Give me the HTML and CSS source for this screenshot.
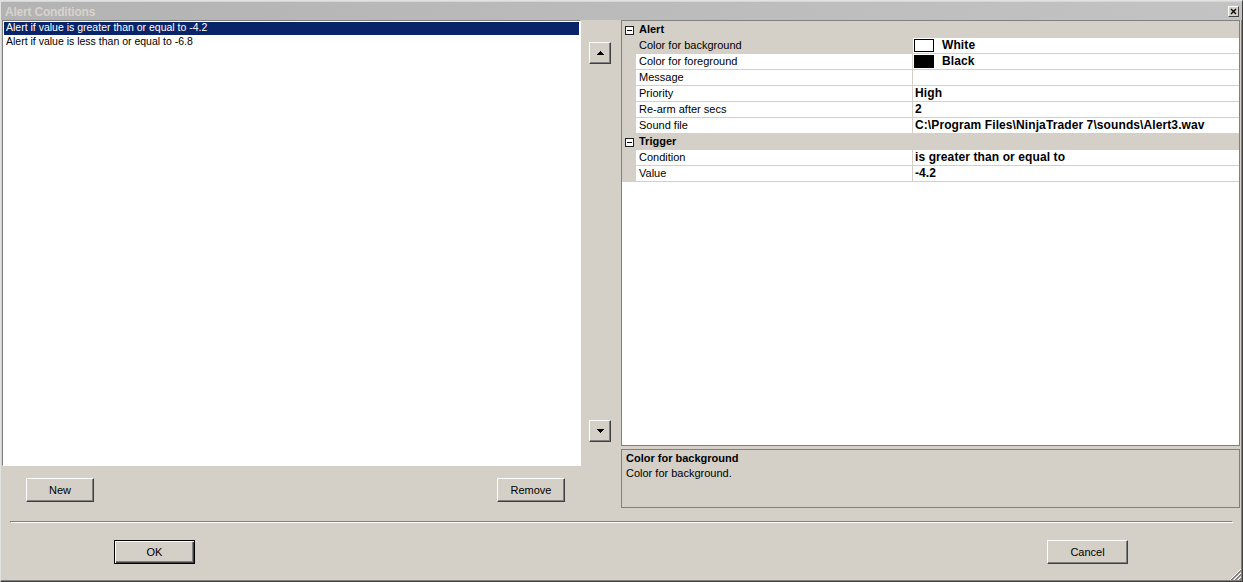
FILE: index.html
```html
<!DOCTYPE html>
<html>
<head>
<meta charset="utf-8">
<title>Alert Conditions</title>
<link rel="stylesheet" href="styles.css">
</head>
<body>
<div class="window">
  <div class="titlebar">
    <span class="title">Alert Conditions</span>
    <span class="close-btn">
      <svg width="9" height="9" viewBox="0 0 9 9"><path d="M2 2 L7 7 M7 2 L2 7" stroke="#000" stroke-width="1.4" fill="none"/></svg>
    </span>
  </div>

  <div class="content">
    <div class="left-col">
      <div class="listbox">
        <div class="list-item selected">Alert if value is greater than or equal to -4.2</div>
        <div class="list-item">Alert if value is less than or equal to -6.8</div>
      </div>
      <div class="list-buttons">
        <button class="btn btn-small">New</button>
        <button class="btn btn-small">Remove</button>
      </div>
    </div>

    <div class="arrows">
      <button class="btn arrow-btn">
        <svg width="7" height="4" viewBox="0 0 7 4" shape-rendering="crispEdges"><path d="M3 0h1v1h1v1h1v1h1v1H0V3h1V2h1V1h1z" fill="#000"/></svg>
      </button>
      <button class="btn arrow-btn arrow-down">
        <svg width="7" height="4" viewBox="0 0 7 4" shape-rendering="crispEdges"><path d="M0 0h7v1H6v1H5v1H4v1H3V3H2V2H1V1H0z" fill="#000"/></svg>
      </button>
    </div>

    <div class="right-col">
      <div class="propgrid">
        <div class="pg-row category">
          <div class="pg-gutter"><span class="expander"></span></div>
          <div class="pg-cat-label">Alert</div>
        </div>
        <div class="pg-row">
          <div class="pg-gutter"></div>
          <div class="pg-label selected">Color for background</div>
          <div class="pg-value"><span class="swatch swatch-white"></span>White</div>
        </div>
        <div class="pg-row">
          <div class="pg-gutter"></div>
          <div class="pg-label">Color for foreground</div>
          <div class="pg-value"><span class="swatch swatch-black"></span>Black</div>
        </div>
        <div class="pg-row">
          <div class="pg-gutter"></div>
          <div class="pg-label">Message</div>
          <div class="pg-value"></div>
        </div>
        <div class="pg-row">
          <div class="pg-gutter"></div>
          <div class="pg-label">Priority</div>
          <div class="pg-value">High</div>
        </div>
        <div class="pg-row">
          <div class="pg-gutter"></div>
          <div class="pg-label">Re-arm after secs</div>
          <div class="pg-value">2</div>
        </div>
        <div class="pg-row">
          <div class="pg-gutter"></div>
          <div class="pg-label">Sound file</div>
          <div class="pg-value">C:\Program Files\NinjaTrader 7\sounds\Alert3.wav</div>
        </div>
        <div class="pg-row category">
          <div class="pg-gutter"><span class="expander"></span></div>
          <div class="pg-cat-label">Trigger</div>
        </div>
        <div class="pg-row">
          <div class="pg-gutter"></div>
          <div class="pg-label">Condition</div>
          <div class="pg-value">is greater than or equal to</div>
        </div>
        <div class="pg-row">
          <div class="pg-gutter"></div>
          <div class="pg-label">Value</div>
          <div class="pg-value">-4.2</div>
        </div>
      </div>
      <div class="desc">
        <div class="desc-title">Color for background</div>
        <div class="desc-text">Color for background.</div>
      </div>
    </div>
  </div>

  <div class="separator"></div>

  <div class="footer">
    <button class="btn btn-wide btn-default">OK</button>
    <button class="btn btn-wide">Cancel</button>
  </div>

  <span class="grip">
    <svg width="12" height="12" viewBox="0 0 12 12" shape-rendering="crispEdges">
      <g stroke="#ffffff" stroke-width="1">
        <path d="M12 1 L1 12 M12 5 L5 12 M12 9 L9 12"/>
      </g>
      <g stroke="#808080" stroke-width="1">
        <path d="M12 2 L2 12 M12 3 L3 12 M12 6 L6 12 M12 7 L7 12 M12 10 L10 12 M12 11 L11 12"/>
      </g>
    </svg>
  </span>
</div>
</body>
</html>
```

FILE: styles.css
```css
html, body {
  margin: 0;
  padding: 0;
  background: #d4d0c8;
}

body {
  font-family: "Liberation Sans", Arial, sans-serif;
  font-size: 11px;
  color: #000;
}

/* dialog frame */
.window {
  position: relative;
  width: 1243px;
  height: 582px;
  box-sizing: border-box;
  background: #d4d0c8;
  border-top: 1px solid #e2e2e2;
  border-left: 1px solid #e2e2e2;
  border-right: 1px solid #404040;
  border-bottom: 1px solid #404040;
  box-shadow: inset -1px -1px 0 #808080;
  display: flex;
  flex-direction: column;
}

/* inactive caption */
.titlebar {
  height: 19px;
  flex: none;
  display: flex;
  justify-content: space-between;
  align-items: flex-start;
  background: linear-gradient(to right, #b3b3b3, #c3c3c3);
  box-shadow: inset 0 1px 0 #d6d6d6;
  padding: 0 3px 0 4px;
}

.title {
  padding-top: 6px;
  font-size: 12px;
  font-weight: bold;
  line-height: 11px;
  color: #d6d3cd;
  letter-spacing: -0.2px;
}

.close-btn {
  margin-top: 5px;
  width: 11px;
  height: 11px;
  box-sizing: border-box;
  background: #d4d0c8;
  border: 1px solid;
  border-color: #ffffff #404040 #404040 #ffffff;
  display: flex;
  align-items: center;
  justify-content: center;
}

/* main area */
.content {
  flex: none;
  height: 488px;
  display: flex;
  padding: 0 1px;
}

.left-col {
  width: 579px;
  display: flex;
  flex-direction: column;
}

.listbox {
  height: 446px;
  box-sizing: border-box;
  background: #fff;
  border: 1px solid;
  border-color: #808080 #ffffff #ffffff #808080;
  padding: 1px;
}

.list-item {
  height: 14px;
  line-height: 11px;
  font-size: 10.5px;
  padding-left: 2px;
  white-space: nowrap;
}

.list-item.selected {
  background: linear-gradient(#0a246a, #0a246a) no-repeat;
  background-size: 100% 13px;
  color: #fff;
}

.list-buttons {
  margin-top: 12px;
  display: flex;
  justify-content: space-between;
  padding: 0 16px 0 24px;
}

/* classic 3D push buttons */
.btn {
  font-family: "Liberation Sans", Arial, sans-serif;
  font-size: 11px;
  color: #000;
  background: #d4d0c8;
  padding: 0;
  margin: 0;
  box-sizing: border-box;
  border: 1px solid;
  border-color: #ffffff #404040 #404040 #ffffff;
  box-shadow: inset -1px -1px 0 #808080;
  display: flex;
  align-items: center;
  justify-content: center;
  outline: none;
}

.btn-small {
  width: 68px;
  height: 24px;
}

.btn-wide {
  width: 81px;
  height: 24px;
}

.btn-default {
  border: 1px solid #000;
  box-shadow: inset 1px 1px 0 #ffffff, inset -1px -1px 0 #404040, inset -2px -2px 0 #808080;
}

.arrows {
  margin-left: 8px;
  margin-right: 10px;
  width: 22px;
  display: flex;
  flex-direction: column;
  padding-top: 22px;
}

.arrow-btn {
  width: 22px;
  height: 22px;
}

.arrow-down {
  margin-top: 356px;
}

/* property grid */
.right-col {
  width: 619px;
  display: flex;
  flex-direction: column;
}

.propgrid {
  height: 426px;
  box-sizing: border-box;
  border: 1px solid #808080;
  padding-top: 1px;
  background: #fff;
}

.pg-row {
  display: grid;
  grid-template-columns: 14px 277px 1fr;
  height: 16px;
  box-sizing: border-box;
  border-bottom: 1px solid #d4d0c8;
}

.propgrid .pg-row:first-child {
  box-shadow: 0 -1px 0 #d4d0c8;
}

.pg-gutter {
  background: #d4d0c8;
}

.pg-row.category {
  background: #d4d0c8;
}

.pg-cat-label {
  grid-column: 2 / 4;
  padding-left: 3px;
  font-weight: bold;
  line-height: 15px;
}

.expander {
  margin: 4px 0 0 3px;
  width: 9px;
  height: 9px;
  box-sizing: border-box;
  border: 1px solid #202020;
  background: #fff;
  display: flex;
  align-items: center;
  justify-content: center;
}

.expander::after {
  content: "";
  width: 5px;
  height: 1px;
  background: #000;
}

.pg-label {
  padding-left: 3px;
  line-height: 15px;
  border-right: 1px solid #d4d0c8;
  white-space: nowrap;
  overflow: hidden;
}

.pg-label.selected {
  background: #d4d0c8;
}

.pg-value {
  padding-left: 2px;
  font-size: 12px;
  font-weight: bold;
  line-height: 15px;
  letter-spacing: 0.1px;
  white-space: nowrap;
  overflow: hidden;
  display: flex;
  align-items: center;
}

.swatch {
  width: 20px;
  height: 13px;
  box-sizing: border-box;
  border: 1px solid #000;
  margin-left: -1px;
  margin-right: 8px;
}

.swatch-white {
  background: #fff;
}

.swatch-black {
  background: #000;
}

/* help text panel */
.desc {
  margin-top: 3px;
  height: 59px;
  box-sizing: border-box;
  border: 1px solid #808080;
  padding: 1px 4px 0;
  line-height: 15px;
}

.desc-title {
  font-weight: bold;
}

/* etched divider */
.separator {
  flex: none;
  margin: 13px 0 0 9px;
  width: 1223px;
  height: 2px;
  box-sizing: border-box;
  border-top: 1px solid #808080;
  border-left: 1px solid #808080;
  border-bottom: 1px solid #ffffff;
  border-right: 1px solid #ffffff;
}

.footer {
  margin-top: 17px;
  display: flex;
  justify-content: space-between;
  padding: 0 114px 0 113px;
}

.grip {
  position: absolute;
  right: 1px;
  bottom: 1px;
  width: 12px;
  height: 12px;
  display: block;
}

.grip svg {
  display: block;
}
```
